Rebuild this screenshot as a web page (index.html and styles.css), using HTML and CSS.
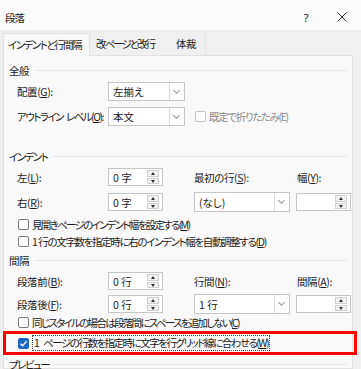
FILE: index.html
```html
<!DOCTYPE html>
<html lang="ja">

<head>
  <meta charset="UTF-8" />
  <meta name="viewport" content="width=device-width, initial-scale=1.0">
  <title>段落</title>
  <link rel="stylesheet" href="styles.css">
</head>

<body>
  <div class="dialog">
    <div class="titlebar">
      <span class="title">段落</span>
      <span class="help">?</span>
      <svg class="close" width="10" height="10" viewBox="0 0 10 10">
        <path d="M0.5 0.5 L9.5 9.5 M9.5 0.5 L0.5 9.5" stroke="#333" stroke-width="1" fill="none" />
      </svg>
    </div>

    <div class="tabs">
      <div class="tab active narrow">インデントと行間隔</div>
      <div class="tab tab2">改ページと改行</div>
      <div class="tab last">体裁</div>
    </div>

    <div class="panel">
      <!-- 全般 -->
      <div class="group-head"><span>全般</span></div>
      <div class="row first">
        <span class="lbl">配置(<u>G</u>):</span>
        <div class="select w77"><span class="val">左揃え</span><span class="drop"></span></div>
      </div>
      <div class="row">
        <span class="lbl narrow">アウトライン<span class="sp"> </span>レベル(<u>O</u>):</span>
        <div class="select w77"><span class="val">本文</span><span class="drop"></span></div>
        <label class="check disabled narrow3 ml9"><span class="box"></span>既定で折りたたみ(E)</label>
      </div>

      <!-- インデント -->
      <div class="group-head sect"><span class="narrow">インデント</span></div>
      <div class="row first">
        <span class="lbl">左(<u>L</u>):</span>
        <div class="spin"><span class="val">0 字</span><span class="btns"><i class="up"></i><i class="down"></i></span></div>
        <span class="lbl2">最初の行(<u>S</u>):</span>
        <span>幅(<u>Y</u>):</span>
      </div>
      <div class="row">
        <span class="lbl">右(<u>R</u>):</span>
        <div class="spin"><span class="val">0 字</span><span class="btns"><i class="up"></i><i class="down"></i></span></div>
        <div class="select tall w96 ml31"><span class="val">(なし)</span><span class="drop"></span></div>
        <div class="spin w51 ml6"><span class="val"></span><span class="btns"><i class="up"></i><i class="down"></i></span></div>
      </div>
      <label class="check line narrow2 first-check"><span class="box"></span>見開きページのインデント幅を設定する(<u>M</u>)</label>
      <label class="check line narrow3"><span class="box"></span><span class="sp">1 </span>行の文字数を指定時に右のインデント幅を自動調整する(<u>D</u>)</label>

      <!-- 間隔 -->
      <div class="group-head sect2"><span>間隔</span></div>
      <div class="row first">
        <span class="lbl">段落前(<u>B</u>):</span>
        <div class="spin"><span class="val">0 行</span><span class="btns"><i class="up"></i><i class="down"></i></span></div>
        <span class="lbl2">行間(<u>N</u>):</span>
        <span>間隔(<u>A</u>):</span>
      </div>
      <div class="row tight">
        <span class="lbl">段落後(<u>F</u>):</span>
        <div class="spin"><span class="val">0 行</span><span class="btns"><i class="up"></i><i class="down"></i></span></div>
        <div class="select tall w96 ml31"><span class="val">1 行</span><span class="drop"></span></div>
        <div class="spin w51 ml6"><span class="val"></span><span class="btns"><i class="up"></i><i class="down"></i></span></div>
      </div>
      <label class="check line narrow2 snug"><span class="box"></span>同じスタイルの場合は段落間にスペースを追加しない(<u>C</u>)</label>

      <div class="highlight">
        <label class="check narrow"><span class="box checked">
            <svg width="9" height="9" viewBox="0 0 9 9">
              <path d="M1.5 4.8 L3.6 6.8 L7.6 2.2" stroke="#fff" stroke-width="1.3" fill="none" />
            </svg>
          </span><span class="focus"><span class="sp">1 </span>ページの行数を指定時に文字を行グリッド線に合わせる(<u>W</u>)</span></label>
      </div>

      <div class="group-head preview"><span class="narrow">プレビュー</span></div>
    </div>
  </div>
</body>

</html>
```

FILE: styles.css
```css
body {
  margin: 0;
  font-family: "Noto Sans CJK JP", "Noto Sans", sans-serif;
  font-size: 10.5px;
  font-feature-settings: "palt";
  letter-spacing: -0.4px;
  color: #1b1b1b;
  background: #f0f0f0;
}

/* kana-heavy labels: the reference UI font has narrow kana */
.narrow {
  letter-spacing: -1.5px;
}

.narrow2 {
  letter-spacing: -1.7px;
}

.narrow3 {
  letter-spacing: -1.35px;
}

/* keep the gap in "1 行" visible */
.sp {
  letter-spacing: 0.5px;
}

.dialog {
  width: 361px;
  height: 369px;
  overflow: hidden;
  background: #f0f0f0;
}

.titlebar {
  height: 30px;
  background: #fbfbfb;
  display: flex;
  align-items: center;
  padding: 0 14px 0 5px;
  box-sizing: border-box;
}

.title {
  flex: 1;
  padding-top: 4px;
  letter-spacing: -1px;
}

.help {
  font-family: "Noto Sans", sans-serif;
  font-size: 11px;
  margin-right: 29px;
  padding-top: 4px;
}

.close {
  margin-top: 4px;
}

.tabs {
  height: 25px;
  display: flex;
  align-items: flex-end;
  padding-left: 3px;
}

.tab {
  height: 22px;
  line-height: 22px;
  padding: 0 7px 0 5px;
  border: 1px solid transparent;
  border-bottom: none;
  white-space: nowrap;
}

.tab.active {
  background: #f9f9f9;
  border-color: #e1e1e1;
  padding: 0 8px 0 4px;
  margin-bottom: -1px;
  position: relative;
}

.tab2 {
  letter-spacing: -2px;
}

.tab.last {
  margin-left: 8px;
  padding-right: 9px;
  border-right-color: #e6e6e6;
  letter-spacing: -0.5px;
}

.panel {
  width: 350px;
  height: 314px;
  box-sizing: border-box;
  margin-left: 3px;
  background: #f9f9f9;
  border: 1px solid #e1e1e1;
  padding: 7px 5px 0 13px;
}

.group-head {
  display: flex;
  align-items: center;
  height: 14px;
  margin-left: -8px;
}

.group-head::after {
  content: "";
  flex: 1;
  height: 1px;
  background: #e6e6e6;
  margin-left: 6px;
}

.sect {
  margin-top: 23px;
}

.sect2 {
  margin-top: 5px;
}

.preview {
  margin-top: 2px;
}

.row {
  display: flex;
  align-items: center;
  height: 20px;
  margin-top: 5px;
  white-space: nowrap;
}

.row.first {
  margin-top: 4px;
}

.row.tight {
  margin-top: 3px;
}

.lbl {
  width: 91px;
  flex: none;
}

.lbl2 {
  width: 103px;
  margin-left: 31px;
}

.select,
.spin {
  height: 19px;
  box-sizing: border-box;
  background: #fff;
  border: 1px solid #c6c6c6;
  display: flex;
  align-items: center;
  flex: none;
  letter-spacing: 0;
}

.select.tall {
  height: 20px;
}

.val {
  flex: 1;
  padding-left: 4px;
  white-space: nowrap;
}

.w77 {
  width: 77px;
}

.w96 {
  width: 96px;
}

.w51 {
  width: 51px;
}

.ml6 {
  margin-left: 6px;
}

.ml9 {
  margin-left: 9px;
}

.ml31 {
  margin-left: 31px;
}

.drop {
  width: 14px;
  height: 100%;
  border-left: 1px solid #dcdcdc;
  position: relative;
}

.drop::after {
  content: "";
  position: absolute;
  left: 4px;
  top: 5px;
  width: 4px;
  height: 4px;
  border-right: 1px solid #9a9a9a;
  border-bottom: 1px solid #9a9a9a;
  transform: rotate(45deg);
}

.spin {
  width: 55px;
  height: 18px;
}

.btns {
  width: 12px;
  height: 14px;
  margin-right: 3px;
  display: flex;
  flex-direction: column;
  gap: 1px;
}

.btns i {
  flex: 1;
  background: #f2f2f2;
  border: 1px solid #d0d0d0;
  position: relative;
}

.btns i::after {
  content: "";
  position: absolute;
  left: 3px;
  width: 0;
  height: 0;
  border-left: 2.5px solid transparent;
  border-right: 2.5px solid transparent;
}

.btns .up::after {
  top: 1px;
  border-bottom: 3px solid #333;
}

.btns .down::after {
  top: 1px;
  border-top: 3px solid #333;
}

.check {
  display: flex;
  align-items: center;
  white-space: nowrap;
}

.check.line {
  height: 14px;
  margin-top: 3px;
}

.check.first-check {
  margin-top: 5px;
}

.check.snug {
  margin-top: 1px;
}

.box {
  width: 11px;
  height: 11px;
  box-sizing: border-box;
  border: 1px solid #7a7a7a;
  border-radius: 2px;
  background: #fff;
  margin: 0 3px 0 1px;
  flex: none;
  display: flex;
  align-items: center;
  justify-content: center;
}

.box.checked {
  background: #1d68c2;
  border-color: #1d68c2;
}

.disabled {
  color: #8c8c8c;
}

.disabled .box {
  border-color: #c4c4c4;
}

.highlight {
  margin: 2px -10px 0 -14px;
  height: 24px;
  box-sizing: border-box;
  border: 3px solid #ff0000;
  padding: 1px 0 0 11px;
}

.focus {
  border: 1px dotted #444;
  padding: 0 1px;
  line-height: 14px;
}
```
